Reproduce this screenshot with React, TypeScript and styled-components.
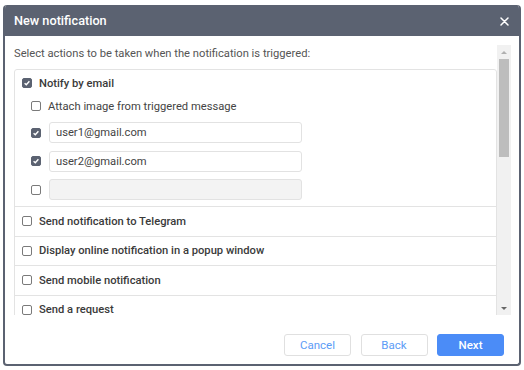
import styled, { createGlobalStyle } from 'styled-components';

const emails = ['user1@gmail.com', 'user2@gmail.com', ''];
const actions = [
  'Send notification to Telegram',
  'Display online notification in a popup window',
  'Send mobile notification',
  'Send a request',
];

export default function App() {
  return (
    <>
      <GlobalStyle />
      <Dialog>
        <Header>
          <Title>New notification</Title>
          <Close aria-label="Close">
            <svg width="9" height="9" viewBox="0 0 9 9">
              <path d="M1 1L8 8M8 1L1 8" stroke="#fff" strokeWidth="1.5" strokeLinecap="round" />
            </svg>
          </Close>
        </Header>
        <Body>
          <Scroller>
            <Intro>Select actions to be taken when the notification is triggered:</Intro>
            <List>
              <EmailSection>
                <Row $height={26}>
                  <Checkbox checked />
                  <Label $strong>Notify by email</Label>
                </Row>
                <Row $height={20} $indent={9}>
                  <Checkbox />
                  <Label>Attach image from triggered message</Label>
                </Row>
                <Inputs>
                  {emails.map((email, i) => (
                    <Row key={i} $height={21} $indent={9}>
                      <Checkbox checked={email !== ''} />
                      <Field $disabled={email === ''}>{email}</Field>
                    </Row>
                  ))}
                </Inputs>
              </EmailSection>
              {actions.map((a) => (
                <ActionRow key={a}>
                  <Checkbox />
                  <Label $strong>{a}</Label>
                </ActionRow>
              ))}
            </List>
          </Scroller>
          <Scrollbar>
            <ScrollButton>
              <Arrow $up $color="#b0b0b0" />
            </ScrollButton>
            <Track>
              <Thumb />
            </Track>
            <ScrollButton>
              <Arrow $color="#666" />
            </ScrollButton>
          </Scrollbar>
        </Body>
        <Footer>
          <Button>Cancel</Button>
          <Button>Back</Button>
          <Button $primary>Next</Button>
        </Footer>
      </Dialog>
    </>
  );
}

function Checkbox({ checked = false }: { checked?: boolean }) {
  return (
    <Box $checked={checked}>
      {checked && (
        <svg width="8" height="8" viewBox="0 0 8 8">
          <path d="M1.6 4.2L3.3 5.8L6.4 2.3" stroke="#fff" strokeWidth="1.4" fill="none" />
        </svg>
      )}
    </Box>
  );
}

const GlobalStyle = createGlobalStyle`
  html, body {
    margin: 0;
    background: #fff;
    font-family: Roboto, "Liberation Sans", Arial, sans-serif;
  }
`;

const Dialog = styled.div`
  box-sizing: border-box;
  margin: 5px 0 0 3px;
  width: 518px;
  height: 361px;
  border: 2px solid #5b6271;
  border-top: none;
  border-radius: 4px;
  background: #fff;
  display: flex;
  flex-direction: column;
  overflow: hidden;
`;

const Header = styled.div`
  height: 31px;
  flex: none;
  background: #5b6271;
  display: flex;
  align-items: center;
  justify-content: space-between;
  padding: 0 10px 0 9px;
`;

const Title = styled.div`
  color: #fff;
  font-size: 12.7px;
  font-weight: 500;
`;

const Close = styled.div`
  display: flex;
  align-items: center;
  padding-top: 1px;
`;

const Body = styled.div`
  display: flex;
  height: 270px;
  margin: 9px 8px 0 9px;
`;

const Scroller = styled.div`
  flex: 1;
  min-width: 0;
  overflow: hidden;
`;

const Intro = styled.div`
  font-size: 11.2px;
  line-height: 14px;
  color: #555;
  padding-top: 2px;
  margin-bottom: 8px;
`;

const List = styled.div`
  border: 1px solid #e3e3e3;
  border-radius: 3px 3px 0 0;
`;

const EmailSection = styled.div`
  padding: 0 0 6px 7px;
  border-bottom: 1px solid #e3e3e3;
`;

const Row = styled.div<{ $height: number; $indent?: number }>`
  display: flex;
  align-items: center;
  gap: 7px;
  height: ${(p) => p.$height}px;
  padding-left: ${(p) => p.$indent ?? 0}px;
`;

const Inputs = styled.div`
  display: flex;
  flex-direction: column;
  gap: 7.5px;
  margin-top: 6px;
`;

const ActionRow = styled.div`
  display: flex;
  align-items: center;
  gap: 7px;
  height: 28.5px;
  padding-left: 7px;
  border-bottom: 1px solid #e3e3e3;
`;

const Box = styled.span<{ $checked: boolean }>`
  box-sizing: border-box;
  width: 10px;
  height: 10px;
  flex: none;
  display: flex;
  align-items: center;
  justify-content: center;
  border-radius: 2px;
  border: 1px solid ${(p) => (p.$checked ? '#5b6271' : '#7a7a7a')};
  background: ${(p) => (p.$checked ? '#5b6271' : '#fff')};
`;

const Label = styled.span<{ $strong?: boolean }>`
  font-size: 11.2px;
  color: ${(p) => (p.$strong ? '#3a3a3a' : '#444')};
  font-weight: ${(p) => (p.$strong ? 500 : 400)};
  white-space: nowrap;
`;

const Field = styled.div<{ $disabled?: boolean }>`
  box-sizing: border-box;
  width: 253px;
  height: 21px;
  margin-left: 1px;
  border: 1px solid #e2e2e2;
  border-radius: 3px;
  background: ${(p) => (p.$disabled ? '#f3f3f3' : '#fff')};
  font-size: 11.2px;
  color: #444;
  padding: 0 6px;
  display: flex;
  align-items: center;
`;

const Scrollbar = styled.div`
  width: 14px;
  flex: none;
  display: flex;
  flex-direction: column;
  background: #f1f1f1;
`;

const ScrollButton = styled.div`
  height: 14px;
  flex: none;
  display: flex;
  align-items: center;
  justify-content: center;
`;

const Arrow = styled.span<{ $up?: boolean; $color: string }>`
  width: 0;
  height: 0;
  border-left: 3.5px solid transparent;
  border-right: 3.5px solid transparent;
  ${(p) =>
    p.$up
      ? `border-bottom: 3.5px solid ${p.$color};`
      : `border-top: 3.5px solid ${p.$color};`}
`;

const Track = styled.div`
  flex: 1;
  display: flex;
  justify-content: center;
`;

const Thumb = styled.div`
  width: 10px;
  height: 98px;
  background: #bdbdbd;
`;

const Footer = styled.div`
  display: flex;
  justify-content: flex-end;
  gap: 9.5px;
  padding: 19px 15px 0 0;
`;

const Button = styled.button<{ $primary?: boolean }>`
  width: 67px;
  height: 22px;
  border-radius: 3px;
  font-family: Roboto, "Liberation Sans", Arial, sans-serif;
  font-size: 11.5px;
  cursor: pointer;
  border: 1px solid ${(p) => (p.$primary ? '#4b8cf7' : '#e0e0e0')};
  background: ${(p) => (p.$primary ? '#4b8cf7' : '#fff')};
  color: ${(p) => (p.$primary ? '#fff' : '#5c9cf6')};
  font-weight: ${(p) => (p.$primary ? 500 : 400)};
`;
